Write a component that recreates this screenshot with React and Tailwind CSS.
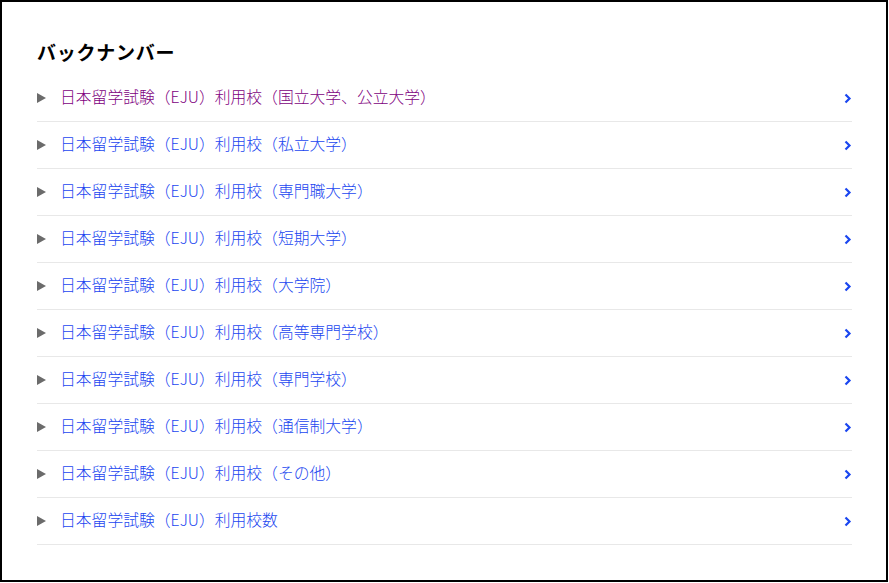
import React from "react";

const items = [
  { t: "日本留学試験（EJU）利用校（国立大学、公立大学）", visited: true },
  { t: "日本留学試験（EJU）利用校（私立大学）" },
  { t: "日本留学試験（EJU）利用校（専門職大学）" },
  { t: "日本留学試験（EJU）利用校（短期大学）" },
  { t: "日本留学試験（EJU）利用校（大学院）" },
  { t: "日本留学試験（EJU）利用校（高等専門学校）" },
  { t: "日本留学試験（EJU）利用校（専門学校）" },
  { t: "日本留学試験（EJU）利用校（通信制大学）" },
  { t: "日本留学試験（EJU）利用校（その他）" },
  { t: "日本留学試験（EJU）利用校数" },
];

function Chevron() {
  return (
    <svg width="8" height="11" viewBox="0 0 8 11" className="shrink-0">
      <path d="M1.5 1.5 L5.5 5.5 L1.5 9.5" fill="none" stroke="#1a46f0" strokeWidth="2.2" />
    </svg>
  );
}

function Triangle() {
  return (
    <svg width="9" height="10" viewBox="0 0 9 10" className="shrink-0">
      <path d="M0 0 L9 5 L0 10 Z" fill="#6b6b6b" />
    </svg>
  );
}

export default function App() {
  return (
    <div
      className="w-[888px] h-[582px] border-2 border-black bg-white box-border"
      style={{ fontFamily: '"Noto Sans CJK JP", "Noto Sans", sans-serif' }}
    >
      <div className="pl-[35px] pr-[34px] pt-[36px]">
        <h2 className="text-[19px] leading-[28px] font-bold text-black tracking-[0.04em] mb-[9px]">
          バックナンバー
        </h2>
        <ul>
          {items.map((it, i) => (
            <li
              key={i}
              className="flex items-center h-[47px] border-b border-[#e8e8e8]"
            >
              <Triangle />
              <span
                className={
                  "ml-[14px] flex-1 text-[15.8px] leading-[24px] mb-[3px] font-light " +
                  (it.visited ? "text-[#800080]" : "text-[#1a46f0]")
                }
              >
                {it.t}
              </span>
              <Chevron />
            </li>
          ))}
        </ul>
      </div>
    </div>
  );
}
